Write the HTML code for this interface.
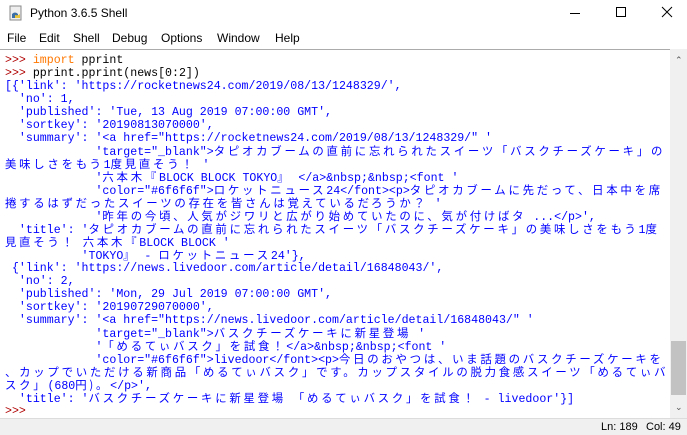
<!DOCTYPE html>
<html><head><meta charset="utf-8"><style>
*{margin:0;padding:0;box-sizing:border-box}
body{width:687px;height:435px;overflow:hidden;background:#fff;font-family:"Liberation Sans",sans-serif;position:relative}
.title{position:absolute;left:0;top:0;width:687px;height:27px;background:#fff}
.title .t{position:absolute;left:30px;top:6px;font-size:12px;color:#000}
.menu{position:absolute;left:0;top:29px;height:19px;font-size:12px}
.menu span{position:absolute;top:2px}
.area{position:absolute;left:0;top:49px;width:687px;height:369px;border-top:1px solid #ababab;background:#fff}
.code{position:absolute;left:5px;top:4px;width:664px;height:363px;overflow:hidden;font-family:"Liberation Mono",monospace;font-size:11.6px;color:#0000ff}
.l{height:13px;line-height:13px;white-space:pre;overflow:hidden}
.j{font-family:"Noto Sans CJK JP",sans-serif;font-size:11.4px;letter-spacing:2.75px}
.p{color:#b00000}.o{color:#ff7700}.k{color:#000}
.sb{position:absolute;right:0;top:49px;width:17px;height:369px;background:#f0f0f0}
.thumb{position:absolute;left:1px;top:292px;width:15px;height:54px;background:#c2c2c2}
.status{position:absolute;left:0;top:418px;width:687px;height:17px;background:#f0f0f0;border-top:1px solid #dcdcdc;font-size:11px}
</style></head><body>
<div class="title">
<svg style="position:absolute;left:8px;top:5px" width="16" height="16"><rect x="2" y="1" width="11" height="14" fill="#eee" stroke="#888"/><path d="M4 9 q3-3 6 0 v4 h-6z" fill="#3a6ea5"/><path d="M7 10 q3 1 5 -1 v4 h-5z" fill="#e8c53a"/></svg>
<div class="t">Python 3.6.5 Shell</div>
<div style="position:absolute;left:570px;top:13px;width:10px;height:1px;background:#000"></div>
<div style="position:absolute;left:616px;top:7px;width:10px;height:10px;border:1px solid #000"></div>
<svg style="position:absolute;left:661px;top:6px" width="12" height="12"><path d="M1 1L11 11M11 1L1 11" stroke="#000" stroke-width="1"/></svg>
</div>
<div class="menu"><span style="left:7px">File</span><span style="left:39px">Edit</span><span style="left:73px">Shell</span><span style="left:112px">Debug</span><span style="left:161px">Options</span><span style="left:217px">Window</span><span style="left:275px">Help</span></div>
<div class="area"><div class="code">
<div class="l"><span class="p">&gt;&gt;&gt; </span><span class="o">import</span><span class="k"> pprint</span></div>
<div class="l"><span class="p">&gt;&gt;&gt; </span><span class="k">pprint.pprint(news[0:2])</span></div>
<div class="l">[{'link': 'https://rocketnews24.com/2019/08/13/1248329/',</div>
<div class="l">  'no': 1,</div>
<div class="l">  'published': 'Tue, 13 Aug 2019 07:00:00 GMT',</div>
<div class="l">  'sortkey': '20190813070000',</div>
<div class="l">  'summary': '&lt;a href="https://rocketnews24.com/2019/08/13/1248329/" '</div>
<div class="l">             'target="_blank"&gt;<span class="j">タピオカブームの直前に忘れられたスイーツ「バスクチーズケーキ」の</span></div>
<div class="l"><span class="j">美味しさをもう</span>1<span class="j">度見直そう！</span> '</div>
<div class="l">             '<span class="j">六本木『</span>BLOCK BLOCK TOKYO<span class="j">』</span> &lt;/a&gt;&amp;nbsp;&amp;nbsp;&lt;font '</div>
<div class="l">             'color="#6f6f6f"&gt;<span class="j">ロケットニュース</span>24&lt;/font&gt;&lt;p&gt;<span class="j">タピオカブームに先だって、日本中を席</span></div>
<div class="l"><span class="j">捲するはずだったスイーツの存在を皆さんは覚えているだろうか？</span> '</div>
<div class="l">             '<span class="j">昨年の今頃、人気がジワリと広がり始めていたのに、気が付けばタ</span> ...&lt;/p&gt;',</div>
<div class="l">  'title': '<span class="j">タピオカブームの直前に忘れられたスイーツ「バスクチーズケーキ」の美味しさをもう</span>1<span class="j">度</span></div>
<div class="l"><span class="j">見直そう！</span> <span class="j">六本木『</span>BLOCK BLOCK '</div>
<div class="l">           'TOKYO<span class="j">』</span> - <span class="j">ロケットニュース</span>24'},</div>
<div class="l"> {'link': 'https://news.livedoor.com/article/detail/16848043/',</div>
<div class="l">  'no': 2,</div>
<div class="l">  'published': 'Mon, 29 Jul 2019 07:00:00 GMT',</div>
<div class="l">  'sortkey': '20190729070000',</div>
<div class="l">  'summary': '&lt;a href="https://news.livedoor.com/article/detail/16848043/" '</div>
<div class="l">             'target="_blank"&gt;<span class="j">バスクチーズケーキに新星登場</span> '</div>
<div class="l">             '<span class="j">「めるてぃバスク」を試食！</span>&lt;/a&gt;&amp;nbsp;&amp;nbsp;&lt;font '</div>
<div class="l">             'color="#6f6f6f"&gt;livedoor&lt;/font&gt;&lt;p&gt;<span class="j">今日のおやつは、いま話題のバスクチーズケーキを</span></div>
<div class="l"><span class="j">、カップでいただける新商品「めるてぃバスク」です。カップスタイルの脱力食感スイーツ「めるてぃバ</span></div>
<div class="l"><span class="j">スク」</span>(680<span class="j">円)。</span>&lt;/p&gt;',</div>
<div class="l">  'title': '<span class="j">バスクチーズケーキに新星登場</span> <span class="j">「めるてぃバスク」を試食！</span> - livedoor'}]</div>
<div class="l"><span class="p">&gt;&gt;&gt;</span></div>
</div></div>
<div class="sb"><div style="position:absolute;left:5px;top:6px;font-size:9px;color:#555">&#8963;</div><div class="thumb"></div><div style="position:absolute;left:5px;top:353px;font-size:9px;color:#555">&#8964;</div></div>
<div class="status"><span style="position:absolute;left:601px;top:2px">Ln: 189</span><span style="position:absolute;left:646px;top:2px">Col: 49</span></div>
</body></html>
